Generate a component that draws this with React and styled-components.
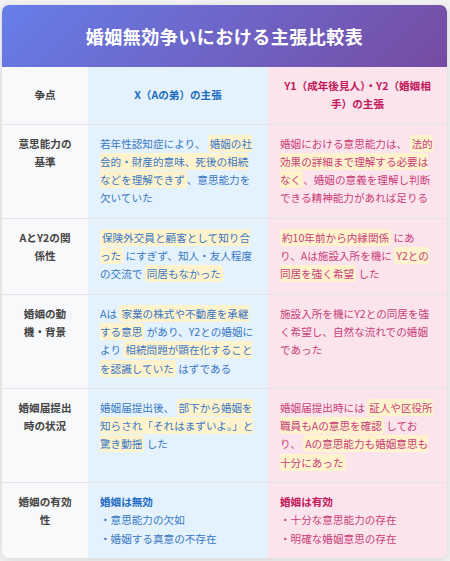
import styled, { createGlobalStyle } from "styled-components";

const GlobalStyle = createGlobalStyle`
  body {
    margin: 0;
    background: #f2f2f2;
    font-family: "Noto Sans CJK JP", "Noto Sans", sans-serif;
  }
`;

const Page = styled.div`
  padding: 5px 3px 6px 2px;
`;

const Card = styled.div`
  background: #fff;
  border-radius: 7px;
  overflow: hidden;
  box-shadow: 0 2px 8px rgba(0, 0, 0, 0.12);
`;

const Title = styled.h1`
  margin: 0;
  height: 62px;
  display: flex;
  align-items: center;
  justify-content: center;
  background: linear-gradient(135deg, #667eea 0%, #764ba2 100%);
  color: #fff;
  font-size: 18px;
  font-weight: 700;
  letter-spacing: 0.5px;
`;

const Grid = styled.div`
  display: grid;
  grid-template-columns: 86px 180px 1fr;
`;

const bg = {
  issue: "#f8f9fa",
  x: "#e3f2fd",
  y: "#fce4ec",
};

const fg = {
  issue: "#444",
  x: "#3a77c4",
  y: "#c8407a",
};

const HeadCell = styled.div`
  background: ${(p) => bg[p.$side]};
  color: ${(p) => (p.$side === "issue" ? "#444" : p.$side === "x" ? "#1e6cc0" : "#c2185b")};
  font-size: 10.6px;
  font-weight: 700;
  line-height: 18.3px;
  padding: 10px 12px;
  text-align: center;
  display: flex;
  align-items: center;
  justify-content: center;
  border-bottom: 1px solid #e2e4e8;
`;

const Cell = styled.div`
  background: ${(p) => bg[p.$side]};
  color: ${(p) => fg[p.$side]};
  font-size: 10.6px;
  font-weight: ${(p) => (p.$side === "issue" ? 700 : 400)};
  text-align: ${(p) => (p.$side === "issue" ? "center" : "left")};
  line-height: 18.3px;
  padding: ${(p) => (p.$side === "issue" ? "10px 13px" : "10px 12px")};
  border-bottom: ${(p) => (p.$last ? "none" : "1px solid #e2e4e8")};
`;

const Mark = styled.span`
  background: #fff3cd;
  padding: 1px 2px;
  border-radius: 3px;
`;

const Verdict = styled.div`
  font-weight: 700;
  color: ${(p) => (p.$side === "x" ? "#1e6cc0" : "#c2185b")};
`;

const Point = styled.div``;

const rows = [
  {
    issue: "意思能力の基準",
    x: (
      <>
        若年性認知症により、 <Mark>婚姻の社会的・財産的意味、死後の相続などを理解できず</Mark>、意思能力を欠いていた
      </>
    ),
    y: (
      <>
        婚姻における意思能力は、 <Mark>法的効果の詳細まで理解する必要はなく</Mark>、婚姻の意義を理解し判断できる精神能力があれば足りる
      </>
    ),
  },
  {
    issue: "AとY2の関係性",
    x: (
      <>
        <Mark>保険外交員と顧客として知り合った</Mark> にすぎず、知人・友人程度の交流で <Mark>同居もなかった</Mark>
      </>
    ),
    y: (
      <>
        <Mark>約10年前から内縁関係</Mark> にあり、Aは施設入所を機に <Mark>Y2との同居を強く希望</Mark> した
      </>
    ),
  },
  {
    issue: "婚姻の動機・背景",
    x: (
      <>
        Aは <Mark>家業の株式や不動産を承継する意思</Mark> があり、Y2との婚姻により <Mark>相続問題が顕在化することを認識していた</Mark> はずである
      </>
    ),
    y: <>施設入所を機にY2との同居を強く希望し、自然な流れでの婚姻であった</>,
  },
  {
    issue: "婚姻届提出時の状況",
    x: (
      <>
        婚姻届提出後、 <Mark>部下から婚姻を知らされ「それはまずいよ。」と驚き動揺</Mark> した
      </>
    ),
    y: (
      <>
        婚姻届提出時には <Mark>証人や区役所職員もAの意思を確認</Mark> しており、 <Mark>Aの意思能力も婚姻意思も十分にあった</Mark>
      </>
    ),
  },
];

export default function App() {
  return (
    <>
      <GlobalStyle />
      <Page>
        <Card>
          <Title>婚姻無効争いにおける主張比較表</Title>
          <Grid>
            <HeadCell $side="issue">争点</HeadCell>
            <HeadCell $side="x">X（Aの弟）の主張</HeadCell>
            <HeadCell $side="y">Y1（成年後見人）・Y2（婚姻相手）の主張</HeadCell>
            {rows.map((r) => (
              <>
                <Cell key={r.issue + "i"} $side="issue">
                  {r.issue}
                </Cell>
                <Cell key={r.issue + "x"} $side="x">
                  {r.x}
                </Cell>
                <Cell key={r.issue + "y"} $side="y">
                  {r.y}
                </Cell>
              </>
            ))}
            <Cell $side="issue" $last>
              婚姻の有効性
            </Cell>
            <Cell $side="x" $last>
              <Verdict $side="x">婚姻は無効</Verdict>
              <Point>・意思能力の欠如</Point>
              <Point>・婚姻する真意の不存在</Point>
            </Cell>
            <Cell $side="y" $last>
              <Verdict $side="y">婚姻は有効</Verdict>
              <Point>・十分な意思能力の存在</Point>
              <Point>・明確な婚姻意思の存在</Point>
            </Cell>
          </Grid>
        </Card>
      </Page>
    </>
  );
}
